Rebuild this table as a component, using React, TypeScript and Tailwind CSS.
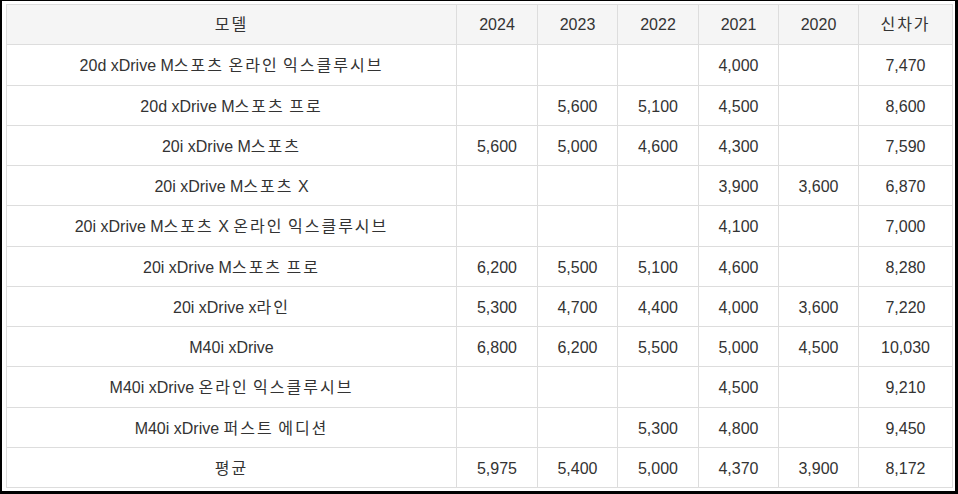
import React from "react";

const rows: [string, string, string, string, string, string, string][] = [
  ["20d xDrive M스포츠 온라인 익스클루시브", "", "", "", "4,000", "", "7,470"],
  ["20d xDrive M스포츠 프로", "", "5,600", "5,100", "4,500", "", "8,600"],
  ["20i xDrive M스포츠", "5,600", "5,000", "4,600", "4,300", "", "7,590"],
  ["20i xDrive M스포츠 X", "", "", "", "3,900", "3,600", "6,870"],
  ["20i xDrive M스포츠 X 온라인 익스클루시브", "", "", "", "4,100", "", "7,000"],
  ["20i xDrive M스포츠 프로", "6,200", "5,500", "5,100", "4,600", "", "8,280"],
  ["20i xDrive x라인", "5,300", "4,700", "4,400", "4,000", "3,600", "7,220"],
  ["M40i xDrive", "6,800", "6,200", "5,500", "5,000", "4,500", "10,030"],
  ["M40i xDrive 온라인 익스클루시브", "", "", "", "4,500", "", "9,210"],
  ["M40i xDrive 퍼스트 에디션", "", "", "5,300", "4,800", "", "9,450"],
  ["평균", "5,975", "5,400", "5,000", "4,370", "3,900", "8,172"],
];

const headers = ["모델", "2024", "2023", "2022", "2021", "2020", "신차가"];
const widths = ["w-[450px]", "w-[81px]", "w-[80px]", "w-[81px]", "w-[80px]", "w-[80px]", "w-[94px]"];

function KText({ text }: { text: string }) {
  const parts = text.split(/([\uAC00-\uD7A3]+)/);
  return (
    <>
      {parts.map((p, i) =>
        /[\uAC00-\uD7A3]/.test(p) ? (
          <span key={i} className="tracking-[2px]">
            {p}
          </span>
        ) : (
          <React.Fragment key={i}>{p}</React.Fragment>
        )
      )}
    </>
  );
}

export default function App() {
  return (
    <div
      className="w-[958px] h-[494px] bg-white border-black border-t-[1px] border-l-[2px] border-r-[3px] border-b-[3px] pt-[3px] pl-[4px] pr-[3px] pb-[3px] box-border"
      style={{ fontFamily: '"Liberation Sans", Arial, "Noto Sans CJK KR", sans-serif' }}
    >
      <table className="w-[946px] h-[484px] table-fixed border-collapse text-[16px] text-[#333333]">
        <colgroup>
          {widths.map((w, i) => (
            <col key={i} className={w} />
          ))}
        </colgroup>
        <thead>
          <tr className="bg-[#f5f5f5] h-[40.25px]">
            {headers.map((h, i) => (
              <th key={i} className="border border-[#dddddd] font-normal text-center p-0 leading-[20px]">
                <KText text={h} />
              </th>
            ))}
          </tr>
        </thead>
        <tbody>
          {rows.map((r, ri) => (
            <tr key={ri} className="h-[40.25px]">
              {r.map((c, ci) => (
                <td key={ci} className="border border-[#dddddd] text-center px-0 pb-0 pt-[3px] leading-[20px]">
                  <KText text={c} />
                </td>
              ))}
            </tr>
          ))}
        </tbody>
      </table>
    </div>
  );
}
